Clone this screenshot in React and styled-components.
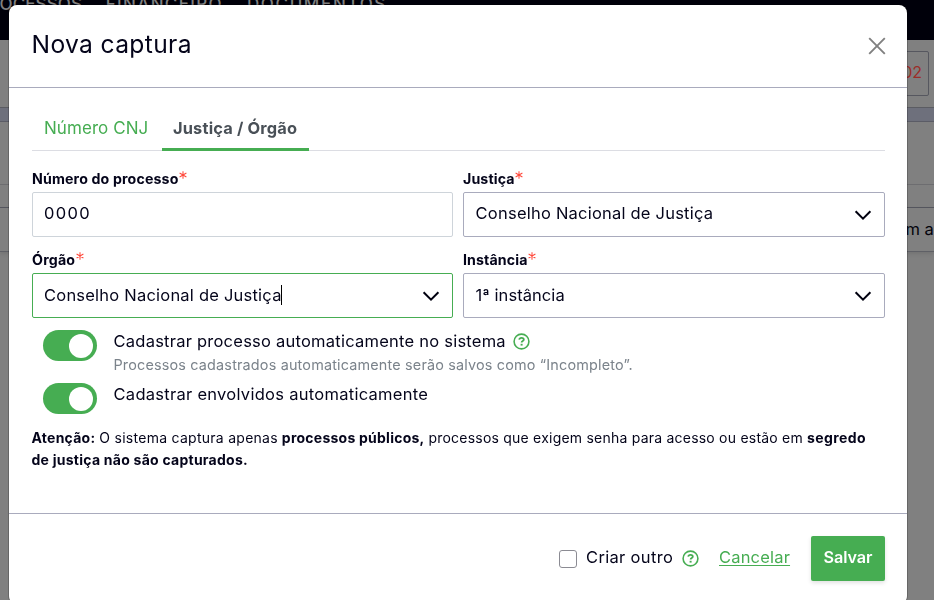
import React from 'react';
import styled, { createGlobalStyle } from 'styled-components';

const GlobalStyle = createGlobalStyle`
  *, *::before, *::after { box-sizing: border-box; }
  html, body { margin: 0; height: 600px; overflow: hidden; }
  body {
    font-family: Inter, "Open Sans", sans-serif;
    font-size: 16.5px;
    color: #04041a;
    background: #808080;
  }
`;

const green = '#46ad52';
const border = '#a9abbd';

const Page = styled.div`
  height: 600px;
  overflow: hidden;
`;

const NavBar = styled.nav`
  height: 40px;
  background: #00000a;
  color: #808080;
  display: flex;
  gap: 24px;
  overflow: hidden;
`;

const NavItem = styled.span`
  width: ${(p) => p.$width}px;
  flex: none;
  margin-top: -6px;
  display: flex;
  justify-content: flex-end;
  font-size: 17px;
  font-weight: 500;
  line-height: 20px;
  height: 20px;
  white-space: nowrap;
  letter-spacing: ${(p) => p.$spacing}px;
`;

const SubHeader = styled.div`
  height: 68px;
  border-bottom: 1px solid #5b5c62;
  display: flex;
  justify-content: flex-end;
  padding: 11px 5px 0 0;
`;

const CountButton = styled.div`
  width: 90px;
  height: 45px;
  border: 1px solid #56575f;
  border-radius: 2px;
  color: #9c2d28;
  font-size: 16px;
  display: flex;
  align-items: center;
  justify-content: flex-end;
  padding: 0 6px 3px 0;
`;

const Band = styled.div`
  height: 14px;
  background: #6e707c;
  border-bottom: 1px solid #5b5c66;
`;

const BackRow = styled.div`
  height: ${(p) => p.$height}px;
  border-bottom: 1px solid ${(p) => p.$line};
  box-shadow: ${(p) => (p.$shadow ? '0 2px 4px rgba(0,0,0,.1)' : 'none')};
  display: flex;
  align-items: center;
  padding: 0 0 2px 905.5px;
  white-space: nowrap;
  overflow: hidden;
  color: #04040c;
`;

const Overlay = styled.div`
  position: fixed;
  inset: 0;
  padding: 5px 27px 0 9px;
  overflow: hidden;
`;

const Modal = styled.section`
  width: 898px;
  height: 599px;
  background: #fff;
  border-radius: 8px;
  box-shadow: 0 0 0 1px rgba(0, 0, 0, 0.2);
  display: flex;
  flex-direction: column;
`;

const Header = styled.header`
  height: 83px;
  flex: none;
  border-bottom: 1px solid ${border};
  padding: 0 21px 3px 22.5px;
  display: flex;
  align-items: center;
  justify-content: space-between;
`;

const Title = styled.h1`
  margin: 0;
  padding-bottom: 2px;
  font-size: 24.6px;
  font-weight: 400;
  line-height: 32px;
  letter-spacing: 0.36px;
`;

const CloseButton = styled.button`
  border: 0;
  background: none;
  padding: 3px 0 0;
  width: 18px;
  height: 21px;
  display: flex;
`;

const Body = styled.div`
  flex: 1;
  padding: 19px 22px 0 23px;
`;

const Tabs = styled.div`
  display: flex;
  height: 44px;
  border-bottom: 1px solid #dcdde3;
`;

const Tab = styled.div`
  width: ${(p) => p.$width}px;
  height: 44px;
  padding-left: ${(p) => (p.$active ? 11.5 : 12)}px;
  line-height: 42px;
  white-space: nowrap;
  font-size: ${(p) => (p.$active ? 16.4 : 17)}px;
  font-weight: ${(p) => (p.$active ? 700 : 400)};
  letter-spacing: ${(p) => (p.$active ? 0.17 : 0.06)}px;
  color: ${(p) => (p.$active ? '#495057' : green)};
  border-bottom: ${(p) => (p.$active ? `3px solid ${green}` : '0')};
`;

const FormGrid = styled.div`
  display: grid;
  grid-template-columns: 421px 422px;
  column-gap: 10px;
  padding-top: 18px;
`;

const Field = styled.div`
  height: ${(p) => p.$height || 81}px;
`;

const Label = styled.label`
  display: flex;
  height: 23px;
  line-height: 20px;
  font-size: 14.2px;
  font-weight: 700;
  letter-spacing: ${(p) => p.$spacing}px;
  color: #04041a;
`;

const Star = styled.svg`
  margin: 2px 0 0 0.5px;
`;

const Control = styled.div`
  height: 45px;
  border: 1px solid ${(p) => p.$line || border};
  border-radius: 2px;
  padding: 0 12px 0 ${(p) => (p.$inset ? p.$inset : 11)}px;
  display: flex;
  align-items: center;
  justify-content: space-between;
  letter-spacing: ${(p) => p.$spacing}px;
`;

const Value = styled.span`
  display: flex;
  align-items: center;
  padding-bottom: ${(p) => (p.$low ? 2 : 4)}px;
`;

const Caret = styled.span`
  width: 1px;
  height: 20px;
  background: #000;
  margin-left: -1px;
`;

const SwitchRow = styled.div`
  display: flex;
  height: 53px;
  padding-left: 11px;
  gap: 16.5px;
`;

const Switch = styled.span`
  width: 54px;
  height: 31px;
  flex: none;
  border-radius: 16px;
  background: ${green};
  display: flex;
  justify-content: flex-end;
  align-items: center;
  padding-right: 4px;
`;

const Knob = styled.span`
  width: 24px;
  height: 24px;
  border-radius: 50%;
  background: #fff;
`;

const SwitchText = styled.div`
  display: flex;
  flex-direction: column;
`;

const SwitchLabel = styled.div`
  display: flex;
  align-items: flex-start;
  gap: 7.5px;
  line-height: 22px;
  height: 23px;
  white-space: nowrap;
  letter-spacing: ${(p) => p.$spacing}px;
`;

const LabelIcon = styled.span`
  display: flex;
  padding-top: 3px;
`;

const Hint = styled.div`
  font-size: 14.4px;
  line-height: 24px;
  white-space: nowrap;
  letter-spacing: 0.175px;
  color: #7b838b;
`;

const Notice = styled.p`
  margin: -9px 0 0 -0.5px;
  font-size: 14px;
  line-height: 22px;
  white-space: nowrap;
`;

const Run = styled.span`
  font-weight: ${(p) => (p.$bold ? 700 : 400)};
  letter-spacing: ${(p) => p.$spacing}px;
`;

const Footer = styled.footer`
  height: 91px;
  flex: none;
  border-top: 1px solid ${border};
  padding: 22px 22px 0 0;
  display: flex;
  justify-content: flex-end;
  align-items: flex-start;
  line-height: 43px;
`;

const CheckBox = styled.span`
  width: 18px;
  height: 18px;
  margin: 14px 9px 0 0;
  border: 1px solid #8b8b93;
  border-radius: 3px;
`;

const CheckLabel = styled.span`
  width: 96px;
  letter-spacing: 0.33px;
  white-space: nowrap;
`;

const CancelLink = styled.a`
  width: 71px;
  margin: 0 21px 0 20px;
  color: ${green};
  text-decoration: underline;
  text-underline-offset: 2px;
  text-decoration-thickness: 1px;
  letter-spacing: 0.18px;
  white-space: nowrap;
`;

const FooterIcon = styled.span`
  display: flex;
  padding-top: 13.5px;
`;

const SaveButton = styled.button`
  width: 74px;
  height: 45px;
  border: 0;
  border-radius: 2px;
  padding: 0 0 3px;
  background: ${green};
  color: #fff;
  font: 600 16.2px Inter, sans-serif;
  letter-spacing: -0.05px;
  box-shadow: 0 2px 4px rgba(0, 0, 0, 0.12);
`;

const HelpIcon = () => (
  <svg width="17" height="17" viewBox="0 0 17 17" fill="none" stroke={green}>
    <circle cx="8.5" cy="8.5" r="7.4" strokeWidth="1.6" />
    <path d="M6.2 6.7C6.4 5.4 7.3 4.8 8.5 4.8C9.8 4.8 10.8 5.5 10.8 6.7C10.8 8.1 8.6 8.1 8.6 9.6" strokeWidth="1.8" />
    <path d="M8.6 10.8V12.6" strokeWidth="2" />
  </svg>
);

const Chevron = () => (
  <svg width="18" height="12" viewBox="0 0 18 12" fill="none">
    <path d="M1.6 2.2L9 9.7L16.4 2.2" stroke="#00000f" strokeWidth="2" />
  </svg>
);

const Required = () => (
  <Star width="8" height="8" viewBox="0 0 8 8" fill="none">
    <path d="M4 0.2V7.8M0.6 2L7.4 6M7.4 2L0.6 6" stroke="#ff4a3d" strokeWidth="1.05" />
  </Star>
);

export default function App() {
  return (
    <>
      <GlobalStyle />
      <Page>
        <NavBar>
          <NavItem $width={82} $spacing={0.1}>PROCESSOS</NavItem>
          <NavItem $width={117} $spacing={1.35}>FINANCEIRO</NavItem>
          <NavItem $width={140} $spacing={1.65}>DOCUMENTOS</NavItem>
        </NavBar>
        <SubHeader>
          <CountButton>02</CountButton>
        </SubHeader>
        <Band />
        <BackRow $height={63} $line="#6d6d70" />
        <BackRow $height={23} $line="#56575f" />
        <BackRow $height={44} $line="#5f6066" $shadow>m a</BackRow>
      </Page>
      <Overlay>
        <Modal>
          <Header>
            <Title>Nova captura</Title>
            <CloseButton aria-label="Fechar">
              <svg width="18" height="18" viewBox="0 0 18 18" fill="none">
                <path d="M1.2 1.2L16.8 16.8M16.8 1.2L1.2 16.8" stroke="#808080" strokeWidth="1.9" />
              </svg>
            </CloseButton>
          </Header>
          <Body>
            <Tabs>
              <Tab $width={129.5}>Número CNJ</Tab>
              <Tab $width={147} $active>Justiça / Órgão</Tab>
            </Tabs>
            <FormGrid>
              <Field>
                <Label $spacing={0.14}>Número do processo<Required /></Label>
                <Control $line="#ced4da" $spacing={1.3}>
                  <Value>0000</Value>
                </Control>
              </Field>
              <Field>
                <Label $spacing={0.12}>Justiça<Required /></Label>
                <Control $inset={11.6} $spacing={0.22}>
                  <Value>Conselho Nacional de Justiça</Value>
                  <Chevron />
                </Control>
              </Field>
              <Field $height={80}>
                <Label $spacing={0.2}>Órgão<Required /></Label>
                <Control $line={green} $spacing={0.22}>
                  <Value $low>Conselho Nacional de Justiça<Caret /></Value>
                  <Chevron />
                </Control>
              </Field>
              <Field $height={80}>
                <Label $spacing={0.12}>Instância<Required /></Label>
                <Control $inset={11.6} $spacing={0.06}>
                  <Value $low>1ª instância</Value>
                  <Chevron />
                </Control>
              </Field>
            </FormGrid>
            <SwitchRow>
              <Switch><Knob /></Switch>
              <SwitchText>
                <SwitchLabel $spacing={0.235}>
                  Cadastrar processo automaticamente no sistema
                  <LabelIcon><HelpIcon /></LabelIcon>
                </SwitchLabel>
                <Hint>Processos cadastrados automaticamente serão salvos como “Incompleto”.</Hint>
              </SwitchText>
            </SwitchRow>
            <SwitchRow>
              <Switch><Knob /></Switch>
              <SwitchText>
                <SwitchLabel $spacing={0.28}>Cadastrar envolvidos automaticamente</SwitchLabel>
              </SwitchText>
            </SwitchRow>
            <Notice>
              <Run $bold $spacing={0.25}>Atenção:</Run>{' '}
              <Run $spacing={0.27}>O sistema captura apenas</Run>{' '}
              <Run $bold $spacing={0.24}>processos públicos,</Run>{' '}
              <Run $spacing={0.22}>processos que exigem senha para acesso ou estão em</Run>{' '}
              <Run $bold $spacing={0.42}>segredo</Run><br />
              <Run $bold $spacing={0.25}>de justiça não são capturados.</Run>
            </Notice>
          </Body>
          <Footer>
            <CheckBox />
            <CheckLabel>Criar outro</CheckLabel>
            <FooterIcon><HelpIcon /></FooterIcon>
            <CancelLink>Cancelar</CancelLink>
            <SaveButton>Salvar</SaveButton>
          </Footer>
        </Modal>
      </Overlay>
    </>
  );
}
